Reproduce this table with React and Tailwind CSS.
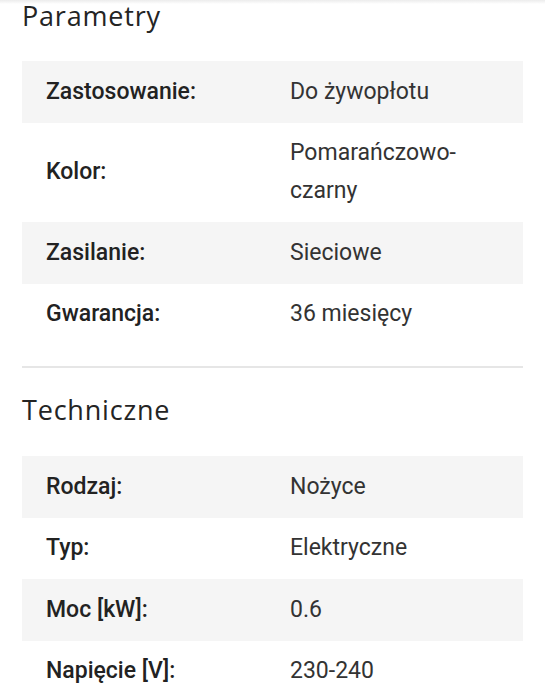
import React from "react";

const parametry = [
  ["Zastosowanie:", ["Do żywopłotu"]],
  ["Kolor:", ["Pomarańczowo-", "czarny"]],
  ["Zasilanie:", ["Sieciowe"]],
  ["Gwarancja:", ["36 miesięcy"]],
];

const techniczne = [
  ["Rodzaj:", ["Nożyce"]],
  ["Typ:", ["Elektryczne"]],
  ["Moc [kW]:", ["0.6"]],
  ["Napięcie [V]:", ["230-240"]],
];

function Table({ rows }) {
  return (
    <div className="flex flex-col">
      {rows.map(([label, value], i) => (
        <div
          key={label}
          className={`grid grid-cols-[244px_1fr] items-center py-[11.75px] ${i % 2 === 0 ? "bg-[#f5f5f5]" : "bg-white"}`}
        >
          <div className="pl-[24px] text-[23px] leading-[38px] font-medium text-[#222]">{label}</div>
          <div className="pl-[24px] text-[23px] leading-[38px] text-[#333]">
            {value.map((v, j) => (
              <div key={j}>{v}</div>
            ))}
          </div>
        </div>
      ))}
    </div>
  );
}

export default function App() {
  return (
    <div
      className="w-[545px] h-[699px] overflow-hidden bg-white relative"
      style={{ fontFamily: "Roboto, 'Liberation Sans', sans-serif" }}
    >
      <div className="absolute inset-x-0 top-0 h-[4px] bg-gradient-to-b from-[#ececec] to-white" />
      <div className="px-[22px]">
        <h2 className="text-[27px] leading-[31px] tracking-[0.8px] font-medium text-[#242424] font-['Open_Sans',sans-serif] mb-[30px]">
          Parametry
        </h2>
        <Table rows={parametry} />
        <div className="mt-[21px] h-[2px] bg-[#e6e6e6]" />
        <h2 className="mt-[26px] text-[27px] leading-[31px] tracking-[0.8px] font-medium text-[#242424] font-['Open_Sans',sans-serif] mb-[31px]">
          Techniczne
        </h2>
        <Table rows={techniczne} />
      </div>
    </div>
  );
}
